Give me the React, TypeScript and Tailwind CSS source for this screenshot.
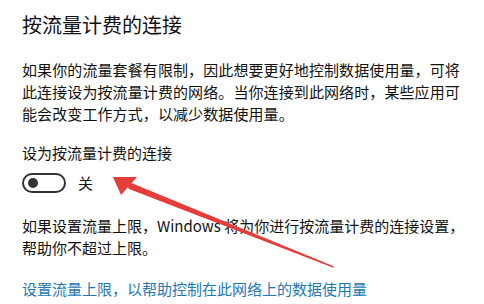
import React from 'react';

const font = { fontFamily: '"Noto Sans CJK SC", "Noto Sans", sans-serif' };

function Toggle() {
  return (
    <div className="flex items-center gap-3">
      <div className="flex h-[20px] w-[44px] items-center rounded-full border-2 border-[#333] pl-[4px]">
        <div className="h-[10px] w-[10px] rounded-full bg-[#333]" />
      </div>
      <span className="text-[15px] leading-[22px] text-[#111]">关</span>
    </div>
  );
}

function Arrow() {
  return (
    <svg className="pointer-events-none absolute left-0 top-0" width="484" height="304" viewBox="0 0 484 304">
      <polygon points="124,180 129,189 334,268 333,266" fill="#e53e3a" />
      <polygon points="113,177 137,177 121,195" fill="#e53e3a" />
    </svg>
  );
}

export default function App() {
  return (
    <div className="relative h-[304px] w-[484px] overflow-hidden bg-white text-[#111]" style={font}>
      <div className="flex flex-col px-[22px] pt-[11px]">
        <h1 className="text-[20px] leading-[28px] font-normal">按流量计费的连接</h1>
        <p className="mt-[20px] whitespace-nowrap text-[15px] leading-[22px] tracking-[0.1px]">
          如果你的流量套餐有限制，因此想要更好地控制数据使用量，可将
          <br />
          此连接设为按流量计费的网络。当你连接到此网络时，某些应用可
          <br />
          能会改变工作方式，以减少数据使用量。
        </p>
        <div className="mt-[17px] text-[15px] leading-[22px]">设为按流量计费的连接</div>
        <div className="mt-[8px]">
          <Toggle />
        </div>
        <p className="mt-[21px] whitespace-nowrap text-[15px] leading-[22px]">
          如果设置流量上限，Windows 将为你进行按流量计费的连接设置，
          <br />
          帮助你不超过上限。
        </p>
        <a className="mt-[19px] text-[15px] leading-[22px] text-[#2378b5]">设置流量上限，以帮助控制在此网络上的数据使用量</a>
      </div>
      <Arrow />
    </div>
  );
}
